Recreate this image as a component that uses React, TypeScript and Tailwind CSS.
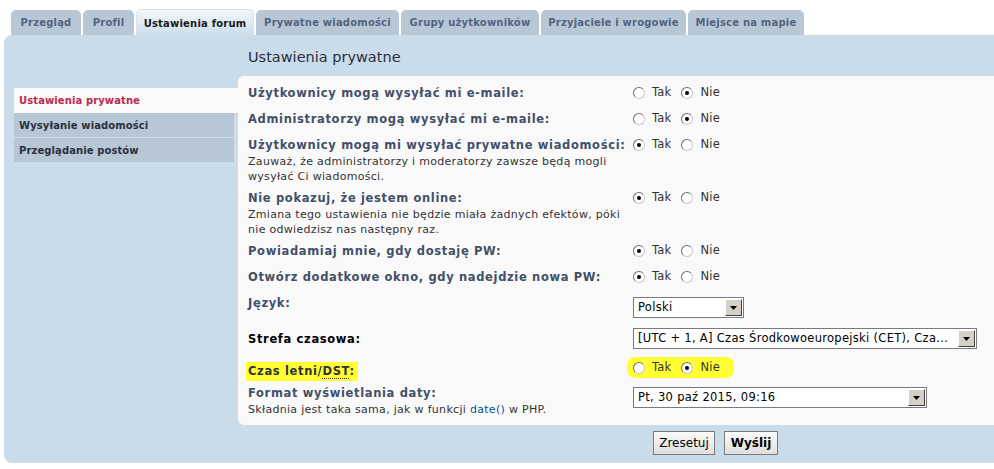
import React from "react";

const font = { fontFamily: '"DejaVu Sans", Verdana, sans-serif' };

function Radio({ checked, className = "" }: { checked: boolean; className?: string }) {
  return (
    <span className={`relative block w-[12px] h-[12px] rounded-full border border-t-[#707070] border-l-[#707070] border-r-[#c8c8c8] border-b-[#c8c8c8] bg-white shrink-0 ${className}`}>
      {checked && (
        <span className="absolute left-[3px] top-[3px] w-[4px] h-[4px] rounded-full bg-black" />
      )}
    </span>
  );
}

function YesNo({ yes }: { yes: boolean }) {
  return (
    <div className="flex items-center h-[18px] text-[11.5px] tracking-[0.2px] text-[#333]">
      <Radio checked={yes} />
      <span className="ml-[7px]">Tak</span>
      <Radio checked={!yes} className="ml-[10px]" />
      <span className="ml-[7px]">Nie</span>
    </div>
  );
}

function Select({ value, width }: { value: string; width: string }) {
  return (
    <div className={`flex items-stretch h-[21px] border border-[#7a7a7a] bg-white ${width}`}>
      <div className="flex-1 flex items-center pl-[4px] text-[11.5px] tracking-[0.3px] text-black whitespace-nowrap overflow-hidden">{value}</div>
      <div className="w-[17px] m-[1px] bg-[#d4d0c8] border border-t-white border-l-white border-r-[#404040] border-b-[#404040] flex items-center justify-center">
        <svg width="7" height="4" viewBox="0 0 7 4"><path d="M0 0h7L3.5 4z" fill="#000" /></svg>
      </div>
    </div>
  );
}

const tabs = [
  { t: "Przegląd", w: "w-[70px]" },
  { t: "Profil", w: "w-[51px]" },
  { t: "Ustawienia forum", w: "w-[118px]", active: true },
  { t: "Prywatne wiadomości", w: "w-[143px]" },
  { t: "Grupy użytkowników", w: "w-[138px]" },
  { t: "Przyjaciele i wrogowie", w: "w-[145px]" },
  { t: "Miejsce na mapie", w: "w-[116px]" },
];

export default function App() {
  return (
    <div className="w-[994px] h-[469px] bg-white overflow-hidden" style={font}>
      {/* tabs */}
      <div className="flex items-end gap-[2px] pl-[11px] h-[35px]">
        {tabs.map((tb) =>
          tb.active ? (
            <div
              key={tb.t}
              className={`${tb.w} h-[27px] mb-[-1px] rounded-t-[5px] border border-b-0 border-[#d6e2ed] bg-gradient-to-b from-[#f3f7fa] to-[#cadcea] flex items-center justify-center text-[10px] tracking-[0.2px] font-bold text-[#1a1a1a]`}
            >
              {tb.t}
            </div>
          ) : (
            <div
              key={tb.t}
              className={`${tb.w} h-[25px] rounded-t-[5px] bg-[#b8c7d5] flex items-center justify-center text-[10px] tracking-[0.2px] font-bold text-[#536482]`}
            >
              {tb.t}
            </div>
          )
        )}
      </div>
      {/* main panel */}
      <div className="ml-[4px] h-[428px] bg-[#cadcea] rounded-l-[8px] flex flex-col">
        <div className="h-[41px] pl-[244px] pt-[13px] text-[14.5px] text-[#28313f] leading-[18px]">Ustawienia prywatne</div>
        <div className="flex">
          {/* left menu */}
          <div className="w-[234px] pl-[10px] pt-[12px]">
            <div className="h-[25px] w-[224px] bg-[#f9f9f9] flex items-center pl-[5px] text-[10px] tracking-[0.1px] font-bold text-[#bc2a4d]">Ustawienia prywatne</div>
            <div className="h-[24px] w-[220px] bg-[#b8c7d5] flex items-center pl-[5px] text-[10px] tracking-[0.1px] font-bold text-[#28313f]">Wysyłanie wiadomości</div>
            <div className="h-[1px] w-[220px] bg-[#d2dde8]" />
            <div className="h-[24px] w-[220px] bg-[#b8c7d5] flex items-center pl-[5px] text-[10px] tracking-[0.1px] font-bold text-[#28313f]">Przeglądanie postów</div>
          </div>
          {/* content */}
          <div className="flex-1 bg-[#f9f9f9] rounded-l-[6px] pt-[4px] pl-[10px] h-[349px]">
            <Row h="h-[26px]" label="Użytkownicy mogą wysyłać mi e-maile:" control={<YesNo yes={false} />} />
            <Row h="h-[26px]" label="Administratorzy mogą wysyłać mi e-maile:" control={<YesNo yes={false} />} />
            <Row
              h="h-[53px]"
              label="Użytkownicy mogą mi wysyłać prywatne wiadomości:"
              desc={<>Zauważ, że administratorzy i moderatorzy zawsze będą mogli<br />wysyłać Ci wiadomości.</>}
              control={<YesNo yes={true} />}
            />
            <Row
              h="h-[53px]"
              label="Nie pokazuj, że jestem online:"
              desc={<>Zmiana tego ustawienia nie będzie miała żadnych efektów, póki<br />nie odwiedzisz nas następny raz.</>}
              control={<YesNo yes={true} />}
            />
            <Row h="h-[26px]" label="Powiadamiaj mnie, gdy dostaję PW:" control={<YesNo yes={true} />} />
            <Row h="h-[26px]" label="Otwórz dodatkowe okno, gdy nadejdzie nowa PW:" control={<YesNo yes={true} />} />
            <Row h="h-[36px]" label="Język:" controlTop="pt-[7px]" control={<Select value="Polski" width="w-[111px]" />} />
            <Row
              h="h-[28px]"
              label="Strefa czasowa:"
              labelColor="text-black"
              controlTop="pt-[2px]"
              control={<Select value="[UTC + 1, A] Czas Środkowoeuropejski (CET), Cza..." width="w-[344px]" />}
            />
            <div className="h-[26px] flex">
              <div className="w-[385px] pt-[4px]">
                <span className="inline-block ml-[-2px] pl-[2px] pr-[3px] h-[19px] leading-[19px] bg-[#ffff33] text-[11.5px] tracking-[0.65px] font-bold text-[#333]">
                  Czas letni/<span className="border-b border-dotted border-[#333]">DST</span>:
                </span>
              </div>
              <div className="pt-[3px]">
                <div className="ml-[-6px] pl-[6px] pr-[14px] h-[21px] flex items-center bg-[#ffff33] rounded-[8px]">
                  <YesNo yes={false} />
                </div>
              </div>
            </div>
            <Row
              h="h-[45px]"
              label="Format wyświetlania daty:"
              desc={<>Składnia jest taka sama, jak w funkcji <span className="text-[#105289]">date()</span> w PHP.</>}
              controlTop="pt-[7px]"
              control={<Select value="Pt, 30 paź 2015, 09:16" width="w-[294px]" />}
            />
          </div>
        </div>
        <div className="flex pl-[649px] pt-[6px] gap-[9px]">
          <button className="h-[24px] w-[62px] border border-[#7a7a7a] bg-gradient-to-b from-[#fafafa] to-[#e0e0e0] text-[12px] text-black" style={font}>Zresetuj</button>
          <button className="h-[24px] w-[54px] border border-[#7a7a7a] bg-gradient-to-b from-[#fafafa] to-[#e0e0e0] text-[12px] font-bold text-black" style={font}>Wyślij</button>
        </div>
      </div>
    </div>
  );
}

function Row({
  h,
  label,
  desc,
  control,
  controlTop = "pt-[4px]",
  labelColor = "text-[#425067]",
}: {
  h: string;
  label: string;
  desc?: React.ReactNode;
  control: React.ReactNode;
  controlTop?: string;
  labelColor?: string;
}) {
  return (
    <div className={`${h} flex`}>
      <div className="w-[385px] pt-[4px] whitespace-nowrap">
        <div className={`text-[11.5px] tracking-[0.65px] font-bold leading-[18px] ${labelColor}`}>{label}</div>
        {desc && <div className="text-[11px] tracking-[0.3px] leading-[15px] text-[#333]">{desc}</div>}
      </div>
      <div className={controlTop}>{control}</div>
    </div>
  );
}
